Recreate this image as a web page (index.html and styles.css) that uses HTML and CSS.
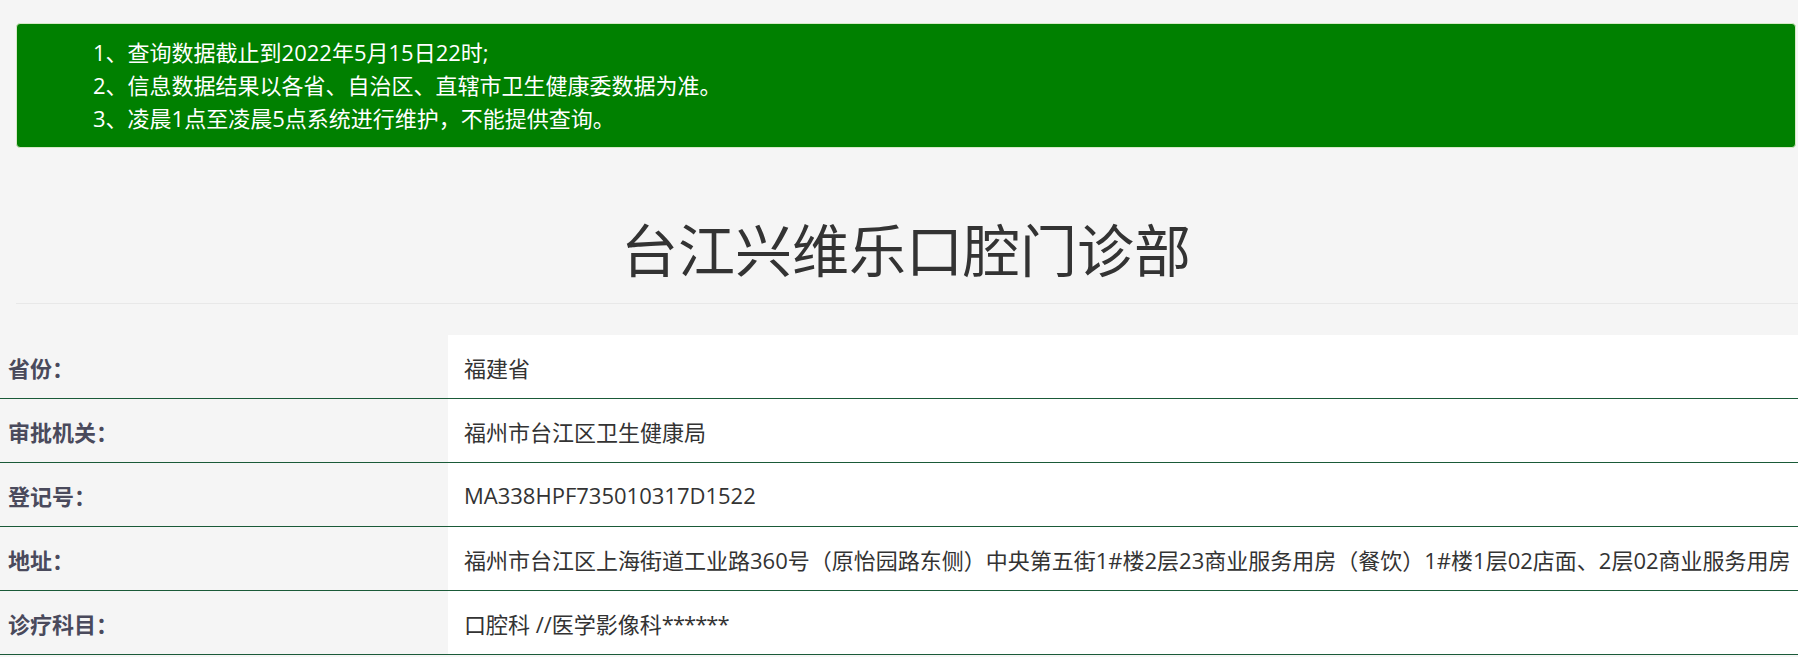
FILE: index.html
```html
<!DOCTYPE html>
<html lang="zh-CN">
<head>
<meta charset="utf-8">
<title>台江兴维乐口腔门诊部</title>
<link rel="stylesheet" href="styles.css">
</head>
<body>
<div class="notice">
  <p class="notice-line">1、查询数据截止到2022年5月15日22时;</p>
  <p class="notice-line">2、信息数据结果以各省、自治区、直辖市卫生健康委数据为准。</p>
  <p class="notice-line">3、凌晨1点至凌晨5点系统进行维护，不能提供查询。</p>
</div>
<h1 class="title">台江兴维乐口腔门诊部</h1>
<div class="divider"></div>
<div class="info">
  <div class="row"><div class="label">省份：</div><div class="value">福建省</div></div>
  <div class="row"><div class="label">审批机关：</div><div class="value">福州市台江区卫生健康局</div></div>
  <div class="row"><div class="label">登记号：</div><div class="value">MA338HPF735010317D1522</div></div>
  <div class="row"><div class="label">地址：</div><div class="value">福州市台江区上海街道工业路360号（原怡园路东侧）中央第五街1#楼2层23商业服务用房（餐饮）1#楼1层02店面、2层02商业服务用房</div></div>
  <div class="row"><div class="label">诊疗科目：</div><div class="value">口腔科 //医学影像科<span class="stars">******</span></div></div>
</div>
</body>
</html>
```
FILE: styles.css
```css
html, body {
  margin: 0;
  padding: 0;
}
body {
  background: #f5f5f5;
  font-family: "Open Sans", "Noto Sans CJK SC", sans-serif;
  color: #333;
}
.notice {
  margin: 23px 2px 0 16px;
  padding: 12px 16px 12px 76px;
  background: #008000;
  border: 1px solid #d6e9c6;
  border-radius: 4px;
  color: #fff;
  font-size: 22px;
  line-height: 33px;
}
.notice-line {
  margin: 0;
}
.title {
  margin: 65px 2px 0 16px;
  font-size: 57px;
  line-height: 68px;
  font-weight: normal;
  text-align: center;
  color: #333;
  font-family: "Noto Sans CJK SC", sans-serif;
}
.divider {
  margin: 22px 0 0 16px;
  height: 1px;
  background: #e8e8e8;
}
.info {
  margin-top: 31px;
}
.row {
  display: grid;
  grid-template-columns: 448px 1fr;
  height: 63px;
  border-bottom: 1px solid #1a5a38;
}
.label {
  display: flex;
  align-items: center;
  padding-left: 8px;
  font-size: 22px;
  font-weight: bold;
  color: #4a4a5c;
}
.value {
  display: flex;
  align-items: center;
  padding-left: 16px;
  background: #fff;
  font-size: 22px;
  color: #333;
  white-space: nowrap;
  overflow: hidden;
}
.stars {
  letter-spacing: -1px;
}
```
